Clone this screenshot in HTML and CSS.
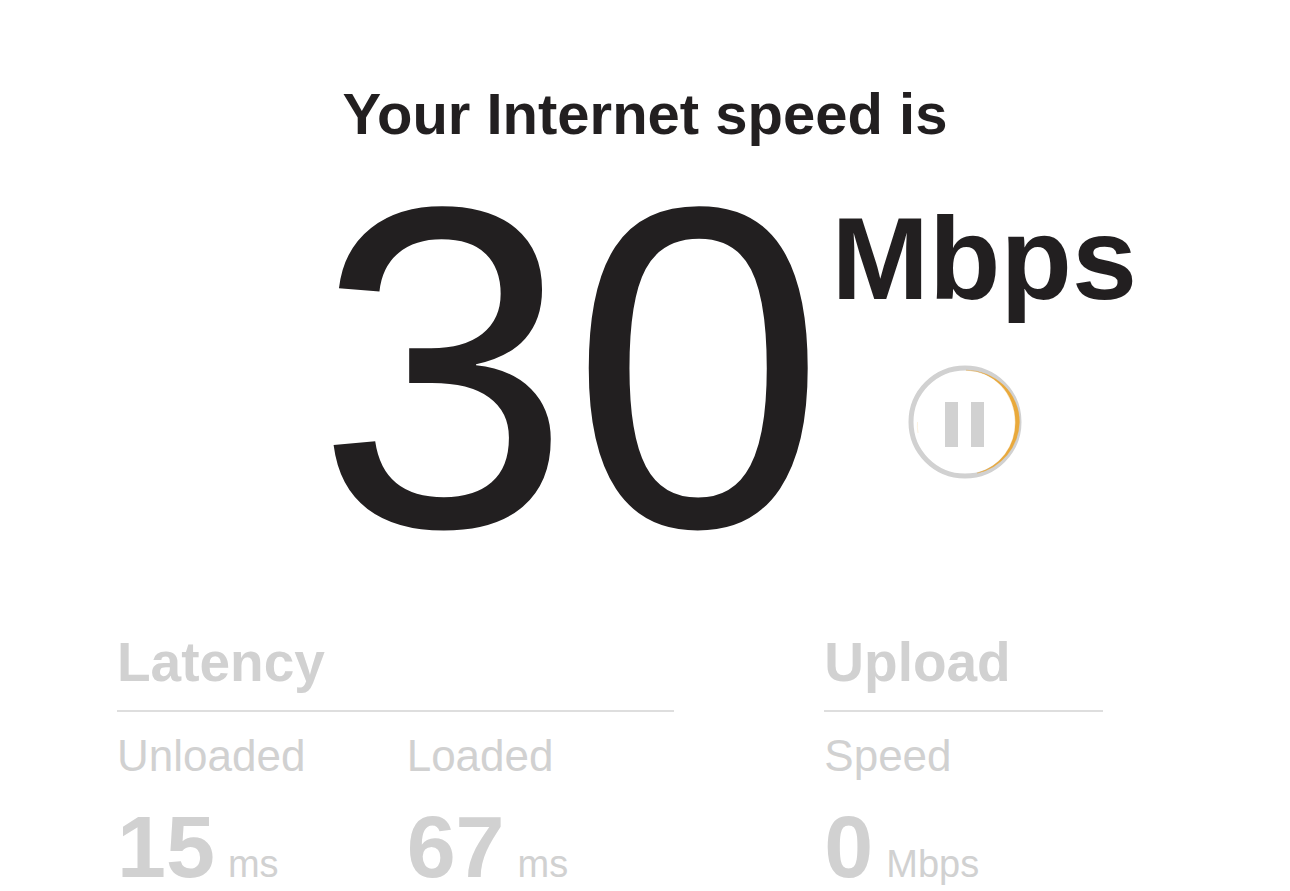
FILE: index.html
```html
<!DOCTYPE html>
<html lang="en">
<head>
<meta charset="utf-8">
<meta name="viewport" content="width=device-width, initial-scale=1">
<title>Internet speed test</title>
<link rel="stylesheet" href="styles.css">
</head>
<body>
<main class="page">
  <h1 class="title">Your Internet speed is</h1>
  <section class="speed">
    <div class="speed-value">30</div>
    <div class="speed-side">
      <div class="speed-unit">Mbps</div>
      <button class="pause" type="button" aria-label="Pause test">
        <svg viewBox="0 0 114 114" aria-hidden="true">
          <circle cx="57" cy="57" r="54" fill="none" stroke="#d1d1d1" stroke-width="5"/>
          <path d="M58 5.2A53.5 51.8 0 0 1 111.5 57A53.5 53.5 0 0 1 69 108.2A52 52 0 0 0 107.3 57A49.3 51.8 0 0 0 58 5.2Z" fill="#e9a93b" stroke="#e9a93b" stroke-opacity="0.35" stroke-width="0.8"/>
          <path d="M9.5 57Q9 63 10 68" fill="none" stroke="#e9a93b" stroke-opacity="0.2" stroke-width="0.8"/>
          <path d="M37 37h13v45H37zM63 37h13v45H63z" fill="#d1d1d1"/>
        </svg>
      </button>
    </div>
  </section>
  <div class="details">
    <section class="group">
      <h2 class="group-title">Latency</h2>
      <dl class="metrics">
        <div class="metric"><dt>Unloaded</dt><dd><strong>15</strong> <span>ms</span></dd></div>
        <div class="metric"><dt>Loaded</dt><dd><strong>67</strong> <span>ms</span></dd></div>
      </dl>
    </section>
    <section class="group">
      <h2 class="group-title">Upload</h2>
      <dl class="metrics">
        <div class="metric"><dt>Speed</dt><dd><strong>0</strong> <span>Mbps</span></dd></div>
      </dl>
    </section>
  </div>
</main>
</body>
</html>
```
FILE: styles.css
```css
* { box-sizing: border-box; }
body {
  margin: 0;
  background: #fff;
  color: #221f20;
  font-family: "Liberation Sans", Arial, sans-serif;
}
h1, h2, dl, dd { margin: 0; }
.page { padding-top: 80px; }
.title {
  text-align: center;
  font-size: 58px;
  line-height: 68px;
  font-weight: 700;
}
.speed {
  display: grid;
  grid-template-columns: 64% 1fr;
  column-gap: 6px;
  padding-top: 50px;
}
.speed-value {
  text-align: right;
  font-size: 458px;
  line-height: 338px;
}
.speed-side {
  display: flex;
  flex-direction: column;
  align-items: flex-start;
}
.speed-unit {
  font-size: 117px;
  line-height: 122px;
  font-weight: 700;
}
.pause {
  width: 114px;
  height: 114px;
  margin: 45px 0 0 76px;
  padding: 0;
  border: 0;
  border-radius: 50%;
  background: none;
  cursor: pointer;
}
.pause svg { display: block; width: 100%; height: 100%; }
.details {
  display: grid;
  grid-template-columns: 2fr 1fr;
  column-gap: 150px;
  padding: 94px 187px 0 117px;
  color: #d1d1d1;
}
.group-title {
  padding-bottom: 16px;
  border-bottom: 2px solid #dedede;
  font-size: 55px;
  line-height: 64px;
  font-weight: 700;
}
.metrics { display: flex; gap: 22px; padding-top: 18px; }
.metric { flex: 1; white-space: nowrap; }
dt { font-size: 44px; line-height: 52px; }
dd {
  display: flex;
  align-items: baseline;
  gap: 13px;
  padding-top: 21px;
  line-height: 88px;
}
dd strong { font-size: 88px; }
dd span { font-size: 38px; }
```
